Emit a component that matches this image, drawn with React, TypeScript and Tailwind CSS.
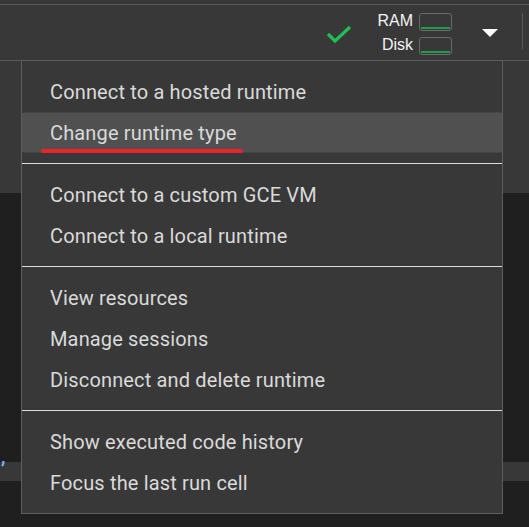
const items: (string | null)[] = [
  'Connect to a hosted runtime',
  'Change runtime type',
  null,
  'Connect to a custom GCE VM',
  'Connect to a local runtime',
  null,
  'View resources',
  'Manage sessions',
  'Disconnect and delete runtime',
  null,
  'Show executed code history',
  'Focus the last run cell',
];

function UsageBox() {
  return (
    <div className="w-[33px] h-[18px] rounded-[3px] border border-[#6a6a6a] flex flex-col justify-end px-[1px] pb-[1px]">
      <div className="h-[2px] bg-[#1e9e4a]" />
    </div>
  );
}

export default function App() {
  return (
    <div className="relative w-[529px] h-[527px] overflow-hidden bg-[#1f1f1f] font-['Roboto',sans-serif]">
      {/* header */}
      <div className="h-[4px] bg-[#383838]" />
      <div className="h-[57px] bg-[#383838] border-y border-[#5a5a5a] flex items-center">
        <div className="flex-1" />
        <svg width="28" height="22" viewBox="0 0 28 22" className="mr-[24px] mt-[3px]">
          <polyline points="3,11 10,18 25,4" fill="none" stroke="#1fbf55" strokeWidth="3.2" />
        </svg>
        <div className="flex flex-col items-end gap-[6px] font-['Liberation_Sans',Arial,sans-serif] text-[16px] leading-[18px] text-[#f2f2f2] mr-[6px] mt-[1px]">
          <span>RAM</span>
          <span>Disk</span>
        </div>
        <div className="flex flex-col gap-[6px] mt-[2px]">
          <UsageBox />
          <UsageBox />
        </div>
        <div className="ml-[30px] mr-[24px] w-0 h-0 border-l-[8px] border-r-[8px] border-t-[8px] border-l-transparent border-r-transparent border-t-white mt-[1px]" />
        <div className="w-px h-[36px] bg-[#5a5a5a] mr-[6px] -mt-[4px]" />
      </div>
      <div className="h-[132px] bg-[#383838]" />
      <div className="h-[269px] bg-[#1f1f1f] flex flex-col justify-end pl-[1px]">
        <span className="text-[#7fb0ff] text-[18px] leading-[16px] font-bold -mb-[3px]">,</span>
      </div>
      <div className="h-[19px] bg-[#383838]" />

      {/* menu */}
      <div className="absolute left-[21px] top-[60px] w-[482px] h-[454px] bg-[#383838] border border-[#5e5e5e] pt-[10px] pb-[10px] text-[20px] tracking-[0.15px] text-[#dadada]">
        {items.map((label, i) =>
          label === null ? (
            <div key={i} className="py-[10px]">
              <div className="h-px bg-[#dcdcdc]" />
            </div>
          ) : label === 'Change runtime type' ? (
            <div key={i} className="relative h-[41px] bg-[#505050] border-y border-dotted border-[#3a3a3a] flex items-center pl-[28px]">
              {label}
              <div className="absolute left-[19px] -bottom-[1px] w-[202px] h-[4px] rounded-full bg-[#ee2229]" />
            </div>
          ) : (
            <div key={i} className="h-[41px] flex items-center pl-[28px]">
              {label}
            </div>
          )
        )}
      </div>
    </div>
  );
}
